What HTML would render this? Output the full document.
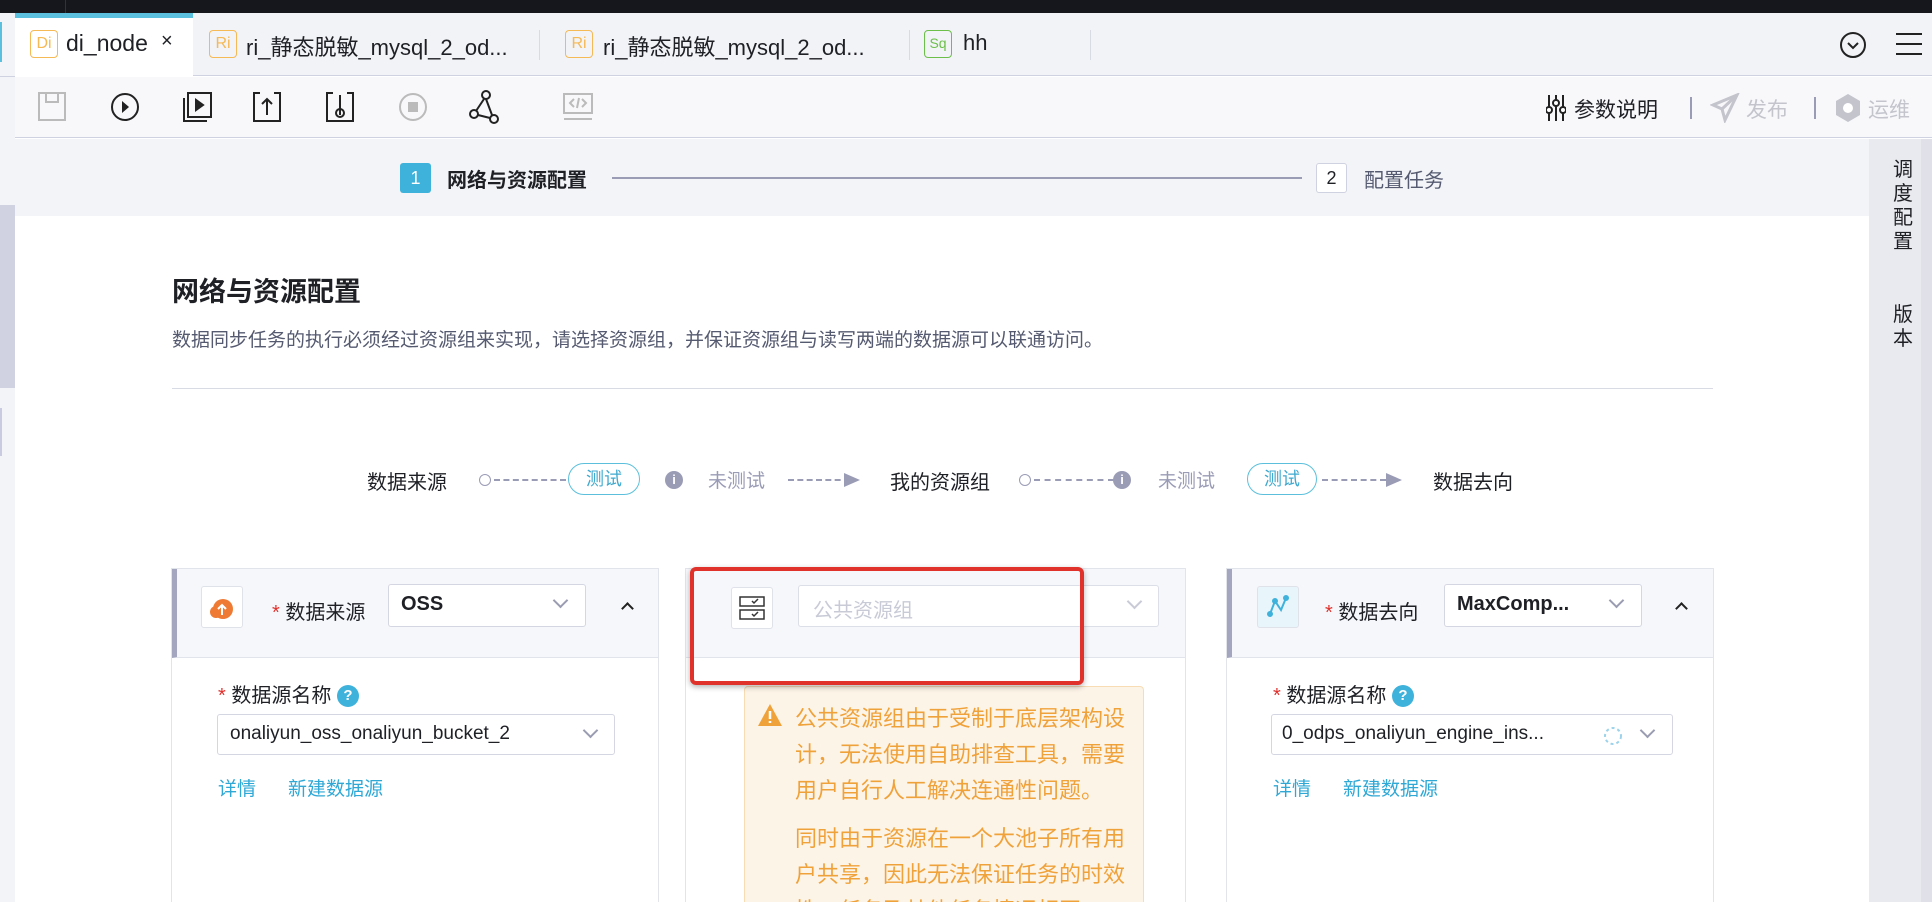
<!DOCTYPE html>
<html style="width:1932px;height:902px;overflow:hidden"><head><meta charset="utf-8">
<style>
*{margin:0;padding:0;box-sizing:border-box}
body{width:1932px;height:902px;overflow:hidden;background:#fff;font-family:"Liberation Sans","Noto Sans CJK SC",sans-serif;color:#1f2026;position:relative}
#w{position:absolute;left:0;top:0;width:1932px;height:902px;overflow:hidden}
.a{position:absolute}
.t{white-space:nowrap}
.tabic{position:absolute;width:28px;height:28px;border:1.5px solid #f5b955;border-radius:4px;color:#f5b955;font-size:16px;line-height:25px;text-align:center}
.sel{position:absolute;border:1px solid #d4d6e2;border-radius:3px;background:#fff}
.chev{position:absolute;width:11px;height:11px;border-right:2px solid #9a9db2;border-bottom:2px solid #9a9db2;transform:rotate(45deg)}
.card{position:absolute;top:568px;height:340px;border:1px solid #e2e4ec;background:#fff;overflow:hidden}
.chd{position:absolute;left:0;right:0;top:0;height:89px;background:#f6f7fa;border-bottom:1px solid #e2e4ec}
.ib{position:absolute;width:42px;height:42px;border:1px solid #e0e2ea;border-radius:3px;background:#fff}
.lbl{font-size:20px;color:#1f2026}
.req{color:#e0302c}
.link{color:#2fa8d6;font-size:19px}
.q{display:inline-block;width:22px;height:22px;border-radius:50%;background:#3fb2dc;color:#fff;font-size:15px;text-align:center;line-height:22px;font-weight:bold;vertical-align:2px}
.dash{position:absolute;height:0;border-top:2px dashed #9a9cb6}
.pill{position:absolute;border:1px solid #5cc0dc;border-radius:16px;color:#3fa9cf;font-size:18px;text-align:center}
.info{position:absolute;width:18px;height:18px;border-radius:50%;background:#9a9cb6;color:#fff;font-size:13px;font-weight:bold;text-align:center;line-height:18px}
.circ{position:absolute;width:12px;height:12px;border:1.5px solid #9a9cb6;border-radius:50%;background:#fff}
.arr{position:absolute;width:0;height:0;border-left:16px solid #9a9cb6;border-top:7px solid transparent;border-bottom:7px solid transparent}
.warn{font-size:22px;color:#f0a23a;line-height:36px}
</style></head><body><div id="w">
<div class="a" style="left:0;top:0;width:1932px;height:13px;background:#16171d"></div>
<div class="a" style="left:65px;top:0;width:1px;height:13px;background:#333"></div>
<div class="a" style="left:0;top:13px;width:15px;height:889px;background:#f3f4f8"></div>
<div class="a" style="left:0;top:22px;width:2px;height:40px;background:#5bc0de"></div>
<div class="a" style="left:0;top:76px;width:15px;height:1px;background:#cfd2e0"></div>
<div class="a" style="left:0;top:205px;width:15px;height:183px;background:#d0d2e2"></div>
<div class="a" style="left:0;top:408px;width:2px;height:48px;background:#c9cce0"></div>
<div class="a" style="left:15px;top:13px;width:1917px;height:63px;background:#f2f3f7;border-bottom:1px solid #cfd2e0"></div>
<div class="a" style="left:15px;top:13px;width:178px;height:64px;background:#fff;border-top:5px solid #5bc0de"></div>
<div class="tabic" style="left:30px;top:30px">Di</div>
<div class="a t" style="left:66px;top:30px;font-size:23px">di_node</div>
<div class="a t" style="left:161px;top:30px;font-size:20px">×</div>
<div class="tabic" style="left:209px;top:30px">Ri</div>
<div class="a t" style="left:246px;top:30px;font-size:22px">ri_静态脱敏_mysql_2_od...</div>
<div class="a" style="left:539px;top:30px;width:1px;height:30px;background:#d8dae4"></div>
<div class="tabic" style="left:565px;top:30px">Ri</div>
<div class="a t" style="left:603px;top:30px;font-size:22px">ri_静态脱敏_mysql_2_od...</div>
<div class="a" style="left:909px;top:30px;width:1px;height:30px;background:#d8dae4"></div>
<div class="tabic" style="left:924px;top:30px;border-color:#6cc04a;color:#6cc04a;font-size:14px">Sq</div>
<div class="a t" style="left:963px;top:30px;font-size:22px">hh</div>
<div class="a" style="left:1090px;top:30px;width:1px;height:30px;background:#d8dae4"></div>
<svg class="a" style="left:1838px;top:30px" width="30" height="30"><circle cx="15" cy="15" r="12" fill="none" stroke="#222" stroke-width="2"/><path d="M10 13l5 5 5-5" fill="none" stroke="#222" stroke-width="2"/></svg>
<svg class="a" style="left:1895px;top:31px" width="28" height="26"><path d="M1 3h26M1 13h26M1 23h26" stroke="#222" stroke-width="2"/></svg>
<div class="a" style="left:15px;top:77px;width:1917px;height:61px;background:#f8f8fb;border-bottom:1px solid #cfd2e0"></div>
<svg class="a" style="left:38px;top:92px" width="30" height="30" fill="none" stroke-width="2"><rect x="1" y="1" width="26" height="27" stroke="#bbb"/><rect x="8" y="1" width="12" height="9" stroke="#bbb"/></svg>
<svg class="a" style="left:110px;top:92px" width="30" height="30" fill="none"><circle cx="15" cy="15" r="13" stroke="#222" stroke-width="2"/><path d="M12 9l7 6-7 6z" fill="#222"/></svg>
<svg class="a" style="left:181px;top:91px" width="32" height="32" fill="none" stroke="#222" stroke-width="2"><path d="M3 7v23h23"/><rect x="7" y="2" width="23" height="24"/><path d="M15 9l7 5-7 5z" fill="#222"/></svg>
<svg class="a" style="left:252px;top:91px" width="30" height="32" fill="none" stroke="#222" stroke-width="2"><path d="M8 2H2v28h26V2h-6M15 24V8M10 13l5-5 5 5"/></svg>
<svg class="a" style="left:325px;top:91px" width="30" height="32" fill="none" stroke="#222" stroke-width="2"><path d="M8 2H2v28h26V2h-6M15 4v20"/><circle cx="15" cy="22" r="4"/></svg>
<svg class="a" style="left:398px;top:92px" width="30" height="30" fill="none"><circle cx="15" cy="15" r="13" stroke="#bbb" stroke-width="2"/><rect x="10" y="10" width="10" height="10" fill="#bbb"/></svg>
<svg class="a" style="left:468px;top:90px" width="32" height="34" fill="none" stroke="#222" stroke-width="2"><circle cx="18" cy="5" r="4"/><circle cx="6" cy="24" r="4"/><circle cx="26" cy="29" r="4"/><path d="M16 9l-8 12M18 9l6 16M10 25l12 3"/></svg>
<svg class="a" style="left:563px;top:93px" width="30" height="28" fill="none" stroke="#bbb" stroke-width="2"><rect x="1" y="1" width="28" height="19"/><path d="M1 26h28M11 6l-4 4 4 4M19 6l4 4-4 4M16 5l-2 10"/></svg>
<svg class="a" style="left:1546px;top:94px" width="20" height="28" fill="none" stroke="#222" stroke-width="2"><path d="M3 1v26M10 1v26M17 1v26"/><circle cx="3" cy="16" r="3" fill="#fff"/><circle cx="10" cy="9" r="3" fill="#fff"/><circle cx="17" cy="16" r="3" fill="#fff"/></svg>
<div class="a t" style="left:1574px;top:94px;font-size:21px">参数说明</div>
<div class="a" style="left:1690px;top:97px;width:2px;height:22px;background:#9a9cb6"></div>
<svg class="a" style="left:1710px;top:93px" width="30" height="30" fill="none" stroke="#c3c4cc" stroke-width="3"><path d="M27 2L3 12l9 4 3 11z"/><path d="M12 16L27 2"/></svg>
<div class="a t" style="left:1746px;top:94px;font-size:21px;color:#c3c4cc">发布</div>
<div class="a" style="left:1814px;top:97px;width:2px;height:22px;background:#9a9cb6"></div>
<svg class="a" style="left:1834px;top:93px" width="28" height="30"><path d="M14 1l12 7v14l-12 7-12-7V8z" fill="#c3c4cc"/><circle cx="14" cy="15" r="5" fill="#fff"/></svg>
<div class="a t" style="left:1868px;top:94px;font-size:21px;color:#c3c4cc">运维</div>
<div class="a" style="left:15px;top:139px;width:1854px;height:77px;background:#f3f4f7"></div>
<div class="a" style="left:400px;top:163px;width:31px;height:30px;background:#3fb2dc;border-radius:3px;color:#fff;font-size:18px;text-align:center;line-height:30px">1</div>
<div class="a t" style="left:447px;top:164px;font-size:20px;font-weight:bold">网络与资源配置</div>
<div class="a" style="left:612px;top:177px;width:690px;height:2px;background:#9a9cb6"></div>
<div class="a" style="left:1316px;top:163px;width:31px;height:30px;background:#fff;border:1px solid #cfd2e0;border-radius:3px;font-size:18px;text-align:center;line-height:28px">2</div>
<div class="a t" style="left:1364px;top:164px;font-size:20px;color:#555a70">配置任务</div>
<div class="a" style="left:1869px;top:139px;width:63px;height:763px;background:#e9eaf0"></div>
<div class="a" style="left:1921px;top:139px;width:11px;height:763px;background:#dfe0e8"></div>
<div class="a" style="left:1891px;top:158px;width:24px;font-size:20px;line-height:24px;text-align:center">调<br>度<br>配<br>置</div>
<div class="a" style="left:1891px;top:303px;width:24px;font-size:20px;line-height:24px;text-align:center">版<br>本</div>
<div class="a t" style="left:172px;top:270px;font-size:27px;font-weight:bold">网络与资源配置</div>
<div class="a t" style="left:172px;top:325px;font-size:19px;color:#555a70">数据同步任务的执行必须经过资源组来实现，请选择资源组，并保证资源组与读写两端的数据源可以联通访问。</div>
<div class="a" style="left:172px;top:388px;width:1541px;height:1px;background:#d8dae4"></div>
<div class="a t" style="left:367px;top:466px;font-size:20px">数据来源</div>
<div class="circ" style="left:479px;top:474px"></div>
<div class="dash" style="left:494px;top:479px;width:72px"></div>
<div class="pill" style="left:568px;top:463px;width:72px;height:32px;line-height:30px">测试</div>
<div class="info" style="left:665px;top:471px">i</div>
<div class="a t" style="left:708px;top:466px;font-size:19px;color:#9a9cb6">未测试</div>
<div class="dash" style="left:788px;top:479px;width:62px"></div>
<div class="arr" style="left:844px;top:473px"></div>
<div class="a t" style="left:890px;top:466px;font-size:20px">我的资源组</div>
<div class="circ" style="left:1019px;top:474px"></div>
<div class="dash" style="left:1034px;top:479px;width:80px"></div>
<div class="info" style="left:1113px;top:471px">i</div>
<div class="a t" style="left:1158px;top:466px;font-size:19px;color:#9a9cb6">未测试</div>
<div class="pill" style="left:1247px;top:463px;width:70px;height:32px;line-height:30px">测试</div>
<div class="dash" style="left:1322px;top:479px;width:64px"></div>
<div class="arr" style="left:1386px;top:473px"></div>
<div class="a t" style="left:1433px;top:466px;font-size:20px">数据去向</div>
<div class="card" style="left:171px;width:488px">
 <div class="chd" style="border-left:5px solid #a3a6be"></div>
 <div class="ib" style="left:29px;top:17px"><svg width="40" height="40"><circle cx="21" cy="22" r="10" fill="#ee7a33"/><circle cx="14" cy="25" r="6" fill="#ee7a33"/><path d="M20 28v-9M16 22l4-4 4 4" stroke="#fff" stroke-width="2" fill="none"/></svg></div>
 <div class="a t lbl" style="left:100px;top:27px"><span class="req">*</span> 数据来源</div>
 <div class="sel" style="left:216px;top:15px;width:198px;height:43px"><span class="a" style="left:12px;top:8px;font-size:20px;font-weight:bold">OSS</span><div class="chev" style="left:166px;top:10px"></div></div>
 <div class="chev" style="left:451px;top:35px;transform:rotate(225deg);border-color:#222;width:9px;height:9px"></div>
 <div class="a t lbl" style="left:46px;top:110px"><span class="req">*</span> 数据源名称 <span class="q">?</span></div>
 <div class="sel" style="left:45px;top:145px;width:398px;height:41px"><span class="a t" style="left:12px;top:8px;font-size:19px">onaliyun_oss_onaliyun_bucket_2</span><div class="chev" style="left:367px;top:10px"></div></div>
 <div class="a t link" style="left:46px;top:205px">详情</div>
 <div class="a t link" style="left:116px;top:205px">新建数据源</div>
</div>
<div class="card" style="left:685px;width:501px">
 <div class="chd"></div>
 <div class="ib" style="left:45px;top:18px"><svg width="40" height="40" fill="none" stroke="#333" stroke-width="1.5"><rect x="8" y="9" width="24" height="9"/><rect x="8" y="22" width="24" height="9"/><path d="M20 13l2 2 4-4M20 26l2 2 4-4"/></svg></div>
 <div class="sel" style="left:112px;top:16px;width:361px;height:42px;border-color:#dcdee8"><span class="a t" style="left:14px;top:8px;font-size:20px;color:#c8cad6">公共资源组</span><div class="chev" style="left:330px;top:10px;border-color:#c8cad6"></div></div>
 <div class="a" style="left:58px;top:117px;width:400px;height:300px;background:#fdf4e8;border:1px solid #f7dcb4;border-radius:4px">
  <svg class="a" style="left:12px;top:16px" width="26" height="24"><path d="M13 1L25 23H1z" fill="#f0a23a"/><path d="M13 8v8M13 18v2" stroke="#fff" stroke-width="2.5"/></svg>
  <div class="a warn" style="left:50px;top:14px;width:334px">公共资源组由于受制于底层架构设计，无法使用自助排查工具，需要用户自行人工解决连通性问题。</div>
  <div class="a warn" style="left:50px;top:134px;width:334px">同时由于资源在一个大池子所有用户共享，因此无法保证任务的时效性，任务及其他任务情况相同。</div>
 </div>
</div>
<div class="a" style="left:690px;top:567px;width:394px;height:118px;border:4px solid #e0322a;border-radius:6px;box-shadow:0 2px 6px rgba(0,0,0,.3)"></div>
<div class="card" style="left:1226px;width:488px">
 <div class="chd" style="border-left:5px solid #a3a6be"></div>
 <div class="ib" style="left:30px;top:17px;background:#e8f5fa"><svg width="40" height="40" fill="none" stroke="#3fb2dc" stroke-width="2"><path d="M12 27l5-13 6 9 5-12"/><circle cx="12" cy="27" r="2" fill="#3fb2dc"/><circle cx="17" cy="14" r="2" fill="#3fb2dc"/><circle cx="28" cy="11" r="2" fill="#3fb2dc"/></svg></div>
 <div class="a t lbl" style="left:98px;top:27px"><span class="req">*</span> 数据去向</div>
 <div class="sel" style="left:217px;top:15px;width:198px;height:43px"><span class="a t" style="left:12px;top:8px;font-size:20px;font-weight:bold">MaxComp...</span><div class="chev" style="left:166px;top:10px"></div></div>
 <div class="chev" style="left:450px;top:35px;transform:rotate(225deg);border-color:#222;width:9px;height:9px"></div>
 <div class="a t lbl" style="left:46px;top:110px"><span class="req">*</span> 数据源名称 <span class="q">?</span></div>
 <div class="sel" style="left:44px;top:145px;width:402px;height:41px"><span class="a t" style="left:10px;top:8px;font-size:19px">0_odps_onaliyun_engine_ins...</span><svg class="a" style="left:330px;top:10px" width="22" height="22"><circle cx="11" cy="11" r="8" fill="none" stroke="#9cd3ea" stroke-width="2" stroke-dasharray="3 3"/></svg><div class="chev" style="left:370px;top:10px"></div></div>
 <div class="a t link" style="left:46px;top:205px">详情</div>
 <div class="a t link" style="left:116px;top:205px">新建数据源</div>
</div>
</div></body></html>
